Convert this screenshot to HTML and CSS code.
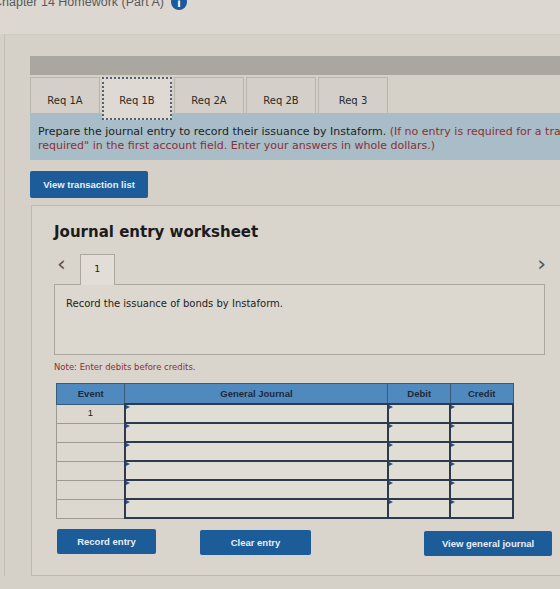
FILE: index.html
```html
<!DOCTYPE html>
<html>
<head>
<meta charset="utf-8">
<link rel="stylesheet" href="styles.css">
</head>
<body>
<div class="titlebar">
  <span class="title">Chapter 14 Homework (Part A)</span>
  <span class="info">i</span>
</div>
<div class="frame">
  <div class="main">
    <div class="graybar"></div>
    <div class="tabs">
      <div class="tab">Req 1A</div>
      <div class="tab active">Req 1B</div>
      <div class="tab">Req 2A</div>
      <div class="tab">Req 2B</div>
      <div class="tab">Req 3</div>
    </div>
    <div class="instr">
      <p>Prepare the journal entry to record their issuance by Instaform. <span class="red">(If no entry is required for a transaction/event, select "No journal entry<br>required" in the first account field. Enter your answers in whole dollars.)</span></p>
    </div>
    <button class="btn btn-list">View transaction list</button>
    <div class="worksheet">
      <h2>Journal entry worksheet</h2>
      <div class="nav">
        <span class="arrow">&#8249;</span>
        <span class="pagetab">1</span>
        <span class="arrow right">&#8250;</span>
      </div>
      <div class="desc">Record the issuance of bonds by Instaform.</div>
      <p class="note">Note: Enter debits before credits.</p>
      <table class="journal">
        <thead>
          <tr><th class="c-ev">Event</th><th class="c-gj">General Journal</th><th class="c-amt">Debit</th><th class="c-amt">Credit</th></tr>
        </thead>
        <tbody>
          <tr><td class="ev">1</td><td class="in"></td><td class="in"></td><td class="in"></td></tr>
          <tr><td class="ev"></td><td class="in"></td><td class="in"></td><td class="in"></td></tr>
          <tr><td class="ev"></td><td class="in"></td><td class="in"></td><td class="in"></td></tr>
          <tr><td class="ev"></td><td class="in"></td><td class="in"></td><td class="in"></td></tr>
          <tr><td class="ev"></td><td class="in"></td><td class="in"></td><td class="in"></td></tr>
          <tr><td class="ev"></td><td class="in"></td><td class="in"></td><td class="in"></td></tr>
        </tbody>
      </table>
      <div class="actions">
        <button class="btn btn-record">Record entry</button>
        <button class="btn btn-clear">Clear entry</button>
        <button class="btn btn-view">View general journal</button>
      </div>
    </div>
  </div>
</div>
</body>
</html>
```

FILE: styles.css
```css
html, body {
  margin: 0;
  padding: 0;
}

body {
  width: 560px;
  height: 589px;
  overflow: hidden;
  background: #d5d0c8;
  font-family: "DejaVu Sans", Verdana, sans-serif;
  color: #222;
}

.titlebar {
  height: 34px;
  display: flex;
  align-items: flex-start;
  background: #dcd8d1;
}

.title {
  margin-top: -5px;
  margin-left: -7px;
  font-family: "Liberation Sans", Arial, sans-serif;
  font-size: 12.5px;
  color: #5a5a5a;
}

.info {
  margin-top: -6px;
  margin-left: 7px;
  width: 16px;
  height: 16px;
  border-radius: 50%;
  background: #1d5a9a;
  color: #fff;
  font-size: 10px;
  font-weight: bold;
  text-align: center;
  line-height: 20px;
}

.frame {
  margin-left: 4px;
  border-left: 1px solid #c4c0b9;
  border-top: 1px solid #cfcac3;
  padding-top: 21px;
}

.main {
  padding-left: 25px;
}

.graybar {
  height: 19px;
  background: #aaa6a0;
}

.tabs {
  display: flex;
  gap: 2px;
  height: 36px;
  margin-top: 2px;
  position: relative;
  z-index: 1;
}

.tab {
  width: 70px;
  height: 36px;
  box-sizing: border-box;
  border: 1px solid #b9b5ae;
  border-bottom: none;
  background: #d4d0c9;
  font-size: 10px;
  display: flex;
  align-items: center;
  justify-content: center;
  padding-top: 10px;
  color: #2a2a2a;
}

.tab.active {
  height: 43px;
  background: #dedad3;
  border: 2px dotted #55606e;
  padding-top: 4px;
}

.instr {
  height: 47px;
  box-sizing: border-box;
  background: #a8bdc7;
  padding: 12px 0 0 8px;
  overflow: hidden;
}

.instr p {
  margin: 0;
  font-size: 11px;
  line-height: 14px;
  white-space: nowrap;
  color: #1e1e1e;
}

.red {
  color: #8e2f33;
}

.btn {
  display: block;
  border: none;
  border-radius: 2px;
  background: #1b5c99;
  color: #e9eef5;
  font-family: "Liberation Sans", Arial, sans-serif;
  font-weight: bold;
  font-size: 9.5px;
  padding: 0;
  cursor: pointer;
}

.btn-list {
  margin-top: 11px;
  width: 118px;
  height: 27px;
}

.worksheet {
  margin-top: 7px;
  margin-left: 1px;
  height: 371px;
  box-sizing: border-box;
  border: 1px solid #bdb8b0;
  border-right: none;
  background: #d9d4cc;
  padding: 16px 0 0 22px;
}

.worksheet h2 {
  margin: 0;
  font-size: 15px;
  font-weight: bold;
  color: #1b1b1b;
  line-height: 20px;
}

.nav {
  display: flex;
  align-items: flex-end;
  height: 31px;
  margin-top: 11px;
  padding-right: 14px;
}

.arrow {
  font-size: 22px;
  line-height: 22px;
  color: #555;
  margin: 0 14px 4px 3px;
  align-self: flex-start;
}

.arrow.right {
  margin-left: auto;
  margin-right: 0;
}

.pagetab {
  width: 35px;
  height: 31px;
  box-sizing: border-box;
  border: 1px solid #aaa6a0;
  border-bottom: none;
  background: #e2ded7;
  font-size: 9.5px;
  text-align: center;
  padding-top: 8px;
  margin-bottom: -1px;
  position: relative;
  z-index: 1;
}

.desc {
  width: 491px;
  height: 71px;
  box-sizing: border-box;
  border: 1px solid #aaa6a0;
  background: #dcd8d0;
  padding: 13px 0 0 11px;
  font-size: 10px;
  color: #222;
}

.note {
  margin: 7px 0 0;
  font-size: 8.5px;
  color: #8e2f33;
}

.journal {
  margin-top: 11px;
  margin-left: 2px;
  border-collapse: collapse;
  width: 458px;
  font-family: "Liberation Sans", Arial, sans-serif;
}

.journal th {
  height: 19px;
  padding: 0;
  background: #5089bd;
  color: #1c2a3c;
  font-size: 9.5px;
  font-weight: bold;
  border: 1px solid #3a5a7a;
}

.c-ev { width: 68px; }
.c-gj { width: 265px; }
.c-amt { width: 62px; }

.journal td {
  height: 17px;
  padding: 0;
}

.journal td.ev {
  border: 1px solid #9d9a94;
  background: #dcd8d0;
  text-align: center;
  font-size: 9.5px;
  vertical-align: top;
  padding-top: 2px;
  height: 15px;
}

.journal td.in {
  border: 2px solid #2c3a50;
  background: #e0ddd5;
  position: relative;
}

.journal td.in::before {
  content: "";
  position: absolute;
  top: 0;
  left: 0;
  border-left: 4px solid #2a4f88;
  border-top: 2px solid transparent;
  border-bottom: 2px solid transparent;
}

.actions {
  display: flex;
  margin-top: 10px;
  margin-left: 3px;
}

.btn-record {
  width: 99px;
  height: 25px;
}

.btn-clear {
  width: 111px;
  height: 25px;
  margin-left: 44px;
  margin-top: 1px;
}

.btn-view {
  width: 128px;
  height: 25px;
  margin-left: 113px;
  margin-top: 2px;
}
```
